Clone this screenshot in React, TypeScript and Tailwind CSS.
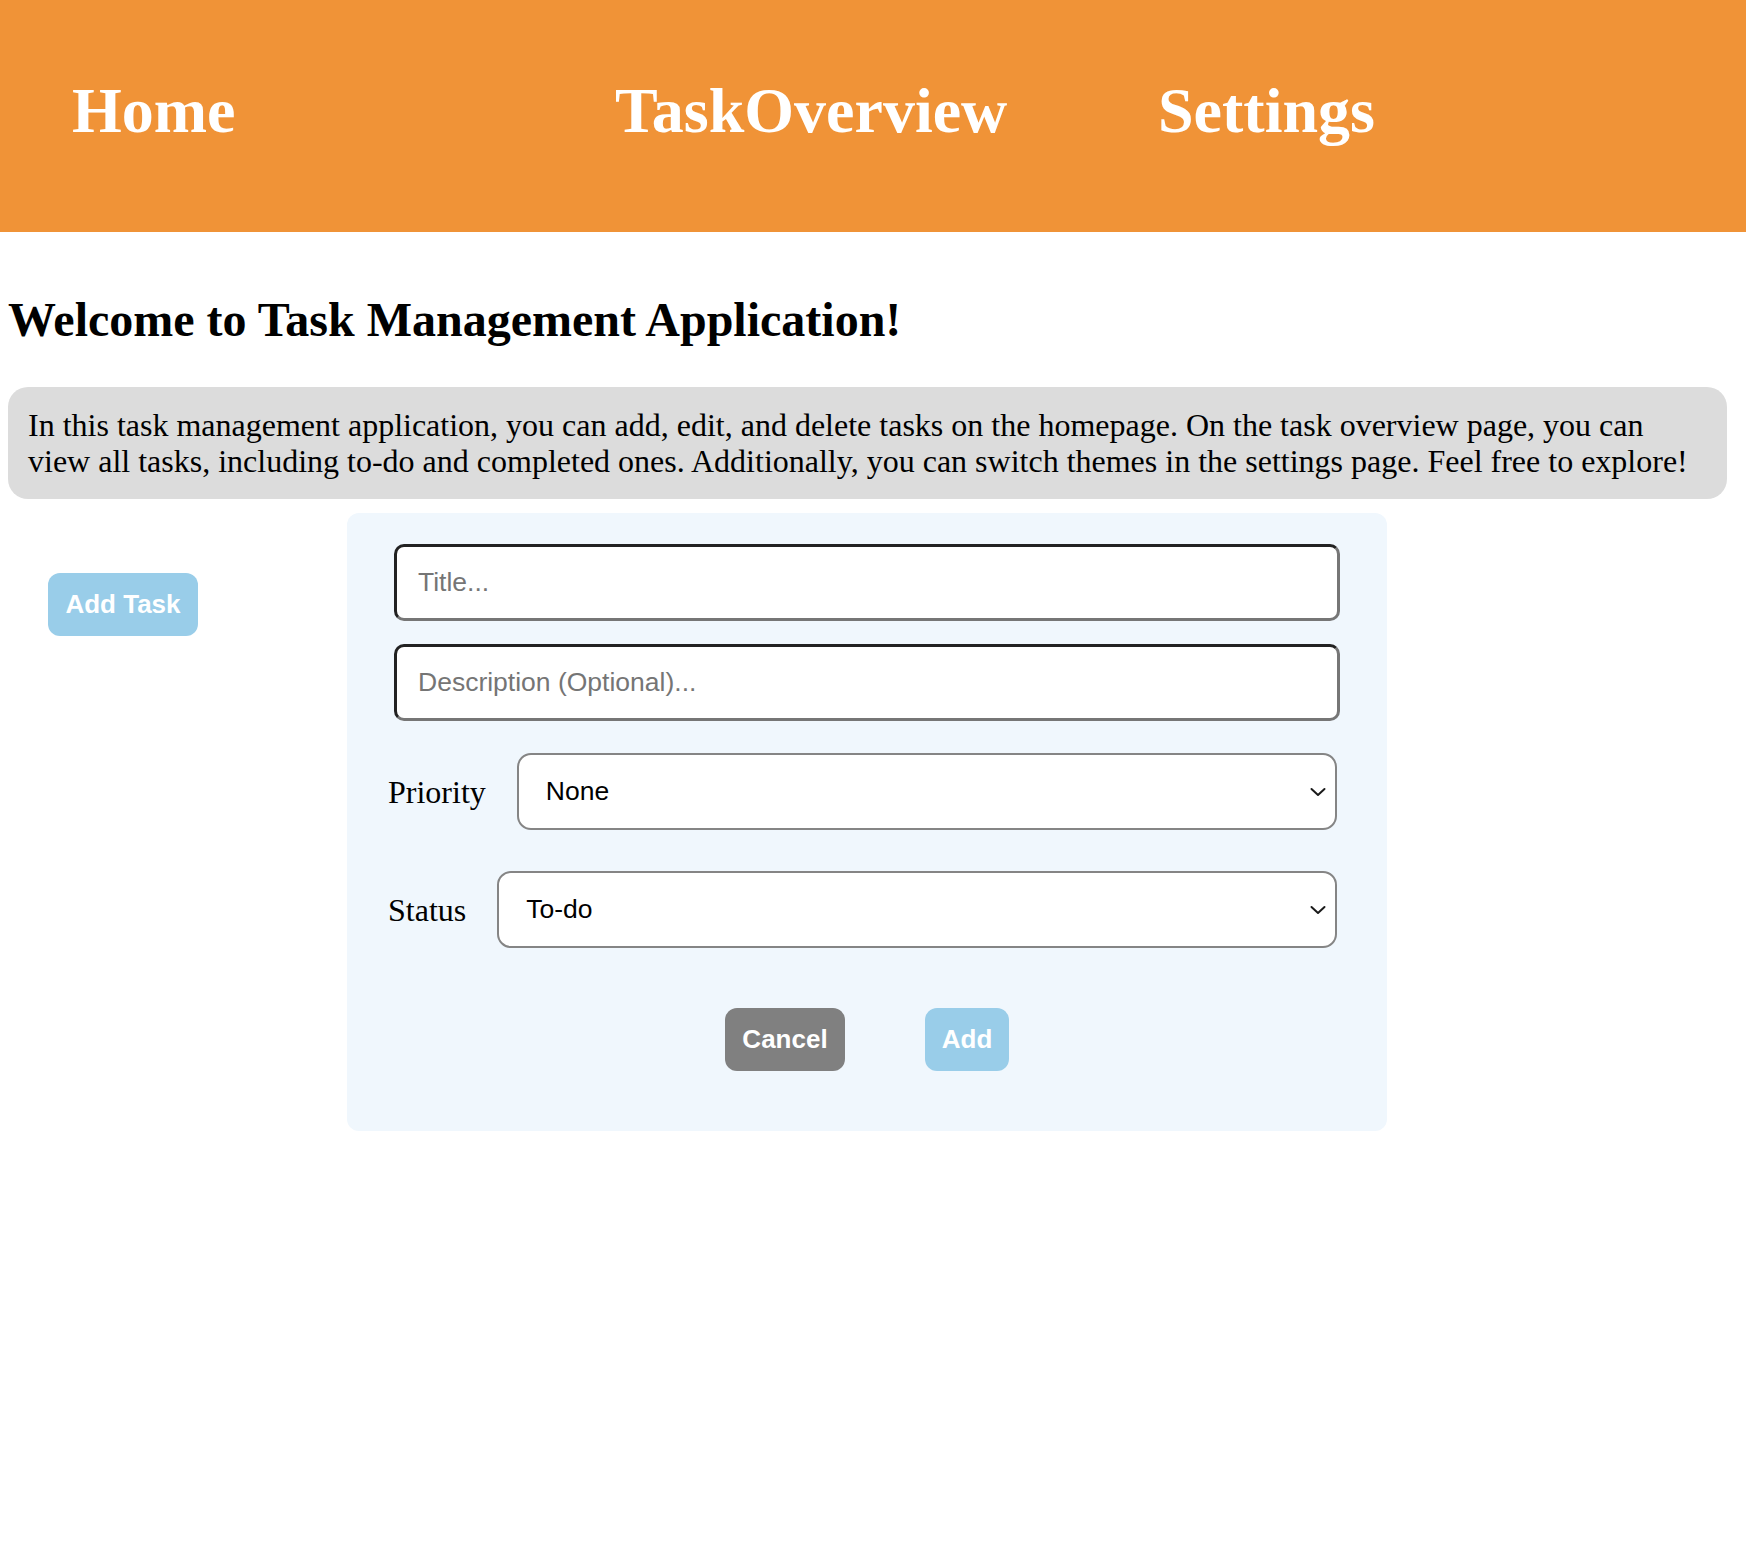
import React from 'react';

const serif = "font-['Liberation_Serif','Times_New_Roman',serif]";
const sans = "font-['Liberation_Sans',Arial,sans-serif]";

const NAV_ITEMS = ['Home', 'TaskOverview', 'Settings'];

const Chevron: React.FC = () => (
  <svg
    className="pointer-events-none absolute right-[9px] top-1/2 -translate-y-1/2"
    width="20"
    height="20"
    viewBox="0 0 20 20"
    fill="none"
  >
    <path d="M3.5 7 L10 13 L16.5 7" stroke="#1a1a1a" strokeWidth="2" strokeLinecap="round" strokeLinejoin="round" />
  </svg>
);

const SelectRow: React.FC<{ label: string; value: string; options: string[]; className?: string }> = ({
  label,
  value,
  options,
  className,
}) => (
  <div className={`flex items-center pl-[41px] pr-[50px] ${className ?? ''}`}>
    <label className={`${serif} mr-[31px] text-[32px] leading-[36px] text-black`}>{label}</label>
    <div className="relative flex-1">
      <select
        defaultValue={value}
        className={`${sans} h-[77px] w-full appearance-none rounded-[14px] border-2 border-[#858585] bg-white pl-[27px] text-[26.5px] text-black outline-none`}
      >
        {options.map((o) => (
          <option key={o}>{o}</option>
        ))}
      </select>
      <Chevron />
    </div>
  </div>
);

const TextInput: React.FC<{ placeholder: string; className?: string }> = ({ placeholder, className }) => (
  <input
    placeholder={placeholder}
    className={`${sans} h-[77px] w-full rounded-[10px] border-[3px] border-t-[#222] border-l-[#222] border-b-[#767676] border-r-[#767676] bg-white pl-[21px] text-[26.5px] text-black outline-none placeholder:text-[#757575] ${className ?? ''}`}
  />
);

export default function App() {
  return (
    <div className="min-h-[1564px] w-full bg-white">
      <header className="flex h-[232px] items-start bg-[#f09337] pl-[72px] pt-[74px]">
        {NAV_ITEMS.map((item) => (
          <a
            key={item}
            href="#"
            className={`${serif} w-[543px] text-[64px] font-bold leading-[74px] text-white`}
          >
            {item}
          </a>
        ))}
      </header>

      <main className="px-[8px]">
        <h1 className={`${serif} mt-[60px] text-[48px] font-bold leading-[55px] text-black`}>
          Welcome to Task Management Application!
        </h1>

        <p
          className={`${serif} mr-[11px] mt-[40px] rounded-[20px] bg-[#dcdcdc] px-[20px] py-[20px] text-[32px] leading-[36px] text-black`}
        >
          In this task management application, you can add, edit, and delete tasks on the homepage. On the task overview page, you can
          <br />
          view all tasks, including to-do and completed ones. Additionally, you can switch themes in the settings page. Feel free to explore!
        </p>

        <div className="mt-[14px] flex items-start">
          <button
            className={`${sans} ml-[40px] mt-[60px] h-[63px] w-[150px] rounded-[12px] bg-[#99cde9] text-[26px] font-bold text-white`}
          >
            Add Task
          </button>

          <div className="ml-[149px] w-[1040px] rounded-[12px] bg-[#f0f7fd] pb-[60px] pt-[31px]">
            <div className="pl-[47px] pr-[47px]">
              <TextInput placeholder="Title..." />
              <TextInput placeholder="Description (Optional)..." className="mt-[23px]" />
            </div>

            <SelectRow
              label="Priority"
              value="None"
              options={['None', 'Low', 'Medium', 'High']}
              className="mt-[32px]"
            />
            <SelectRow
              label="Status"
              value="To-do"
              options={['To-do', 'Completed']}
              className="mt-[41px]"
            />

            <div className="mt-[60px] flex justify-center gap-[80px]">
              <button
                className={`${sans} h-[63px] w-[120px] rounded-[12px] bg-[#808080] text-[26px] font-bold text-white`}
              >
                Cancel
              </button>
              <button
                className={`${sans} h-[63px] w-[84px] rounded-[12px] bg-[#99cde9] text-[26px] font-bold text-white`}
              >
                Add
              </button>
            </div>
          </div>
        </div>
      </main>
    </div>
  );
}
